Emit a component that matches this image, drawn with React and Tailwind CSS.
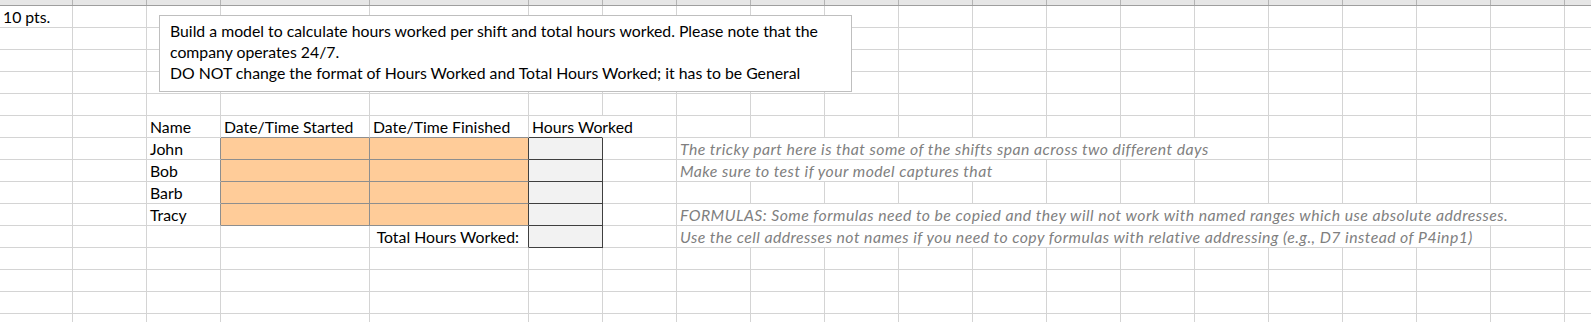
import React from 'react';

// Worksheet column count and edge colours
const COLS = 20;

const RIGHT = {
  grid: 'border-r-[#d4d4d4]',
  mid: 'border-r-[#8e8e8e]',
  dark: 'border-r-[#3f3f3f]',
  none: 'border-r-white',
};

const BOTTOM = {
  grid: 'border-b-[#d4d4d4]',
  mid: 'border-b-[#8e8e8e]',
  dark: 'border-b-[#3f3f3f]',
};

const SPAN = {
  1: '',
  5: 'col-span-5',
  8: 'col-span-8',
  11: 'col-span-11',
  12: 'col-span-12',
};

const INPUT = 'bg-[#ffcc99]';
const OUTPUT = 'bg-[#f2f2f2]';

const person = (name, note, span) => ({
  2: { text: name, r: 'mid' },
  3: { fill: INPUT, r: 'mid', b: 'mid' },
  4: { fill: INPUT, r: 'dark', b: 'mid' },
  5: { fill: OUTPUT, r: 'dark', b: 'dark' },
  ...(note ? { 7: { text: note, span, note: true } } : {}),
});

const rows = [
  { 0: { text: '10 pts.' } },
  {},
  {},
  {},
  {},
  {
    2: { text: 'Name' },
    3: { text: 'Date/Time Started', b: 'mid' },
    4: { text: 'Date/Time Finished', b: 'mid' },
    5: { text: 'Hours Worked', b: 'dark', r: 'none' },
  },
  person('John', 'The tricky part here is that some of the shifts span across two different days', 8),
  person('Bob', 'Make sure to test if your model captures that', 5),
  person('Barb'),
  person(
    'Tracy',
    'FORMULAS: Some formulas need to be copied and they will not work with named ranges which use absolute addresses.',
    12
  ),
  {
    4: { text: 'Total Hours Worked:', r: 'dark', right: true },
    5: { fill: OUTPUT, r: 'dark', b: 'dark' },
    7: {
      text: 'Use the cell addresses not names if you need to copy formulas with relative addressing (e.g., D7 instead of P4inp1)',
      span: 11,
      note: true,
    },
  },
  {},
  {},
  {},
  {},
];

const Cell = ({ cell = {} }) => {
  const span = cell.span || 1;
  return (
    <div
      className={`border-r border-b ${RIGHT[cell.r || 'grid']} ${BOTTOM[cell.b || 'grid']} ${SPAN[span]} ${
        cell.fill || ''
      } ${cell.right ? 'text-right pr-[9px]' : 'pl-[3px]'} ${
        cell.note ? 'italic text-[#7f7f7f] tracking-[0.45px]' : 'text-black'
      } whitespace-nowrap leading-[21px]`}
    >
      {cell.text}
    </div>
  );
};

const Row = ({ cells }) => {
  const out = [];
  for (let c = 0; c < COLS; c++) {
    const cell = cells[c];
    out.push(<Cell key={c} cell={cell} />);
    if (cell && cell.span) c += cell.span - 1;
  }
  return out;
};

export default function App() {
  return (
    <div className="relative w-[1591px] h-[322px] overflow-hidden bg-white font-['Lato',sans-serif] text-[15.8px]">
      {/* column header strip */}
      <div className="grid grid-cols-[73px_74px_74px_149px_159px_repeat(15,74px)] h-[6px] bg-[#e6e6e6] border-b border-b-[#9e9e9e]">
        {Array.from({ length: COLS }).map((_, i) => (
          <div key={i} className="border-r border-r-[#b4b4b4]" />
        ))}
      </div>

      {/* cells */}
      <div className="grid grid-cols-[73px_74px_74px_149px_159px_repeat(15,74px)] auto-rows-[22px]">
        {rows.map((cells, i) => (
          <Row key={i} cells={cells} />
        ))}
      </div>

      {/* floating instructions box */}
      <div className="absolute left-[159px] top-[15px] w-[693px] h-[77px] border border-[#bfbfbf] bg-white pl-[10px] pt-[4px] leading-[21px] text-black">
        <div>Build a model to calculate hours worked per shift and total hours worked. Please note that the</div>
        <div>company operates 24/7.</div>
        <div>DO NOT change the format of Hours Worked and Total Hours Worked; it has to be General</div>
      </div>
    </div>
  );
}
